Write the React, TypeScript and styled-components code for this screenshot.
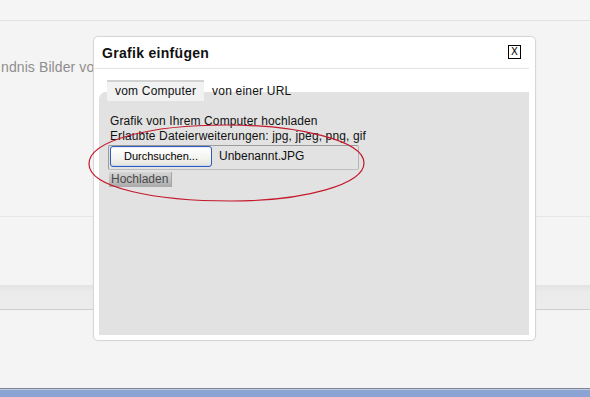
import React from "react";
import styled, { createGlobalStyle } from "styled-components";

const GlobalStyle = createGlobalStyle`
  html, body { margin: 0; padding: 0; background: #f4f4f4; }
  body { font-family: "Liberation Sans", Arial, sans-serif; }
`;

const Page = styled.div`
  position: relative;
  width: 590px;
  height: 397px;
  overflow: hidden;
  display: flex;
  flex-direction: column;
  background: #f4f4f4;
`;

const TopBar = styled.div`
  height: 20px;
  flex: none;
  background: #f5f5f5;
  border-bottom: 1px solid #e2e2e2;
`;

const Main = styled.div`
  height: 196px;
  flex: none;
  box-sizing: border-box;
  padding-top: 38px;
  background: #f4f4f4;
  border-bottom: 1px solid #e7e7e7;
`;

const BgText = styled.div`
  font-size: 14px;
  line-height: 16px;
  color: #8e8e8e;
  white-space: nowrap;
  padding-left: 1px;
  letter-spacing: 0.1px;
`;

const Section = styled.div`
  height: 68px;
  flex: none;
  background: #f4f4f4;
`;

const Band = styled.div`
  height: 24px;
  flex: none;
  background: linear-gradient(#e3e3e3, #ebebeb 30%, #ececec);
  border-bottom: 1px solid #cdcdcd;
`;

const Rest = styled.div`
  flex: 1;
  background: #f4f4f4;
`;

const Taskbar = styled.div`
  height: 8px;
  flex: none;
  border-top: 1px solid #7e8696;
  box-shadow: inset 0 1px 0 #c3cbdc;
  background: #8ba4d4;
`;

const Modal = styled.div`
  position: absolute;
  left: 93px;
  top: 36px;
  width: 443px;
  height: 305px;
  box-sizing: border-box;
  background: #ffffff;
  border: 1px solid #d6d6d6;
  border-radius: 5px;
  box-shadow: 0 0 2px rgba(0, 0, 0, 0.06);
  padding: 0 6px 5px 0;
  display: flex;
  flex-direction: column;
`;

const Header = styled.div`
  height: 32px;
  flex: none;
  box-sizing: border-box;
  border-bottom: 1px solid #e2e2e2;
  display: flex;
  align-items: center;
  justify-content: space-between;
  padding: 0 8px 0 8px;
`;

const Title = styled.div`
  font-size: 14px;
  font-weight: bold;
  letter-spacing: 0.3px;
  color: #111;
  margin-top: 1px;
`;

const CloseBox = styled.div`
  width: 13px;
  height: 14px;
  box-sizing: border-box;
  border: 1px solid #000;
  font-size: 10px;
  line-height: 12px;
  text-align: center;
  color: #000;
  font-family: "DejaVu Sans", sans-serif;
  margin-top: -2px;
`;

const Body = styled.div`
  flex: 1;
  display: flex;
  flex-direction: column;
  padding-left: 5px;
`;

const TabStrip = styled.div`
  display: flex;
  margin-top: 11px;
  margin-bottom: -9px;
  padding-left: 8px;
  position: relative;
  z-index: 1;
  height: 21px;
`;

const Tab = styled.div<{ $active?: boolean }>`
  box-sizing: border-box;
  padding: 0 8px;
  height: 21px;
  font-size: 12px;
  letter-spacing: 0.2px;
  line-height: 19px;
  color: #111;
  background: ${(p) => (p.$active ? "#f2f2f2" : "transparent")};
  border-top: 2px solid ${(p) => (p.$active ? "#d2d2d2" : "transparent")};
`;

const Panel = styled.div`
  flex: 1;
  background: #e2e2e2;
  border-radius: 7px 0 0 0;
  padding: 22px 11px 0 11px;
  display: flex;
  flex-direction: column;
  align-items: flex-start;
  position: relative;
`;

const Line = styled.div`
  font-size: 12px;
  letter-spacing: 0.12px;
  line-height: 15px;
  color: #111;
  white-space: nowrap;
`;

const FileBox = styled.div`
  margin-top: 1px;
  margin-left: -2px;
  width: 251px;
  height: 25px;
  box-sizing: border-box;
  border: 1px solid #9c9c9c;
  border-right-color: #b5b5b5;
  border-bottom-color: #bdbdbd;
  border-radius: 2px;
  display: flex;
  align-items: flex-start;
  padding-left: 1px;
`;

const BrowseButton = styled.div`
  width: 102px;
  height: 21px;
  box-sizing: border-box;
  border: 1px solid #2e5cbc;
  border-radius: 3px;
  background: linear-gradient(#ffffff, #f3f3ef 60%, #e4e3dc);
  box-shadow: inset 0 -1px 0 #c9d5ee, inset 0 1px 0 #e6ecf8;
  font-size: 11px;
  line-height: 19px;
  text-align: center;
  color: #000;
`;

const FileName = styled.div`
  font-size: 12px;
  line-height: 21px;
  margin-left: 7px;
  color: #111;
`;

const UploadButton = styled.div`
  margin-top: 2px;
  margin-left: -1px;
  height: 15px;
  box-sizing: border-box;
  padding: 0 3px 0 2px;
  background: linear-gradient(#d6d6d6, #bdbdbd 60%, #a9a9a9);
  border-right: 1px solid #a4a4a4;
  font-size: 12px;
  line-height: 14px;
  color: #4a4a4a;
`;

const Scribble = styled.svg`
  position: absolute;
  left: -18px;
  top: 26px;
  pointer-events: none;
  overflow: visible;
`;

export default function App() {
  return (
    <>
      <GlobalStyle />
      <Page>
        <TopBar />
        <Main>
          <BgText>ndnis Bilder vo</BgText>
        </Main>
        <Section />
        <Band />
        <Rest />
        <Taskbar />
        <Modal>
          <Header>
            <Title>Grafik einfügen</Title>
            <CloseBox>X</CloseBox>
          </Header>
          <Body>
            <TabStrip>
              <Tab $active>vom Computer</Tab>
              <Tab>von einer URL</Tab>
            </TabStrip>
            <Panel>
              <Line>Grafik von Ihrem Computer hochladen</Line>
              <Line>Erlaubte Dateierweiterungen: jpg, jpeg, png, gif</Line>
              <FileBox>
                <BrowseButton>Durchsuchen...</BrowseButton>
                <FileName>Unbenannt.JPG</FileName>
              </FileBox>
              <UploadButton>Hochladen</UploadButton>
              <Scribble width="290" height="90" viewBox="0 0 290 90">
                <path
                  d="M 8 46 C 8 22, 70 7, 145 7 C 215 7, 283 22, 283 45 C 283 66, 225 83, 150 83 C 75 83, 8 70, 8 46 Z"
                  fill="none"
                  stroke="#c4182c"
                  strokeWidth="1.2"
                />
              </Scribble>
            </Panel>
          </Body>
        </Modal>
      </Page>
    </>
  );
}
